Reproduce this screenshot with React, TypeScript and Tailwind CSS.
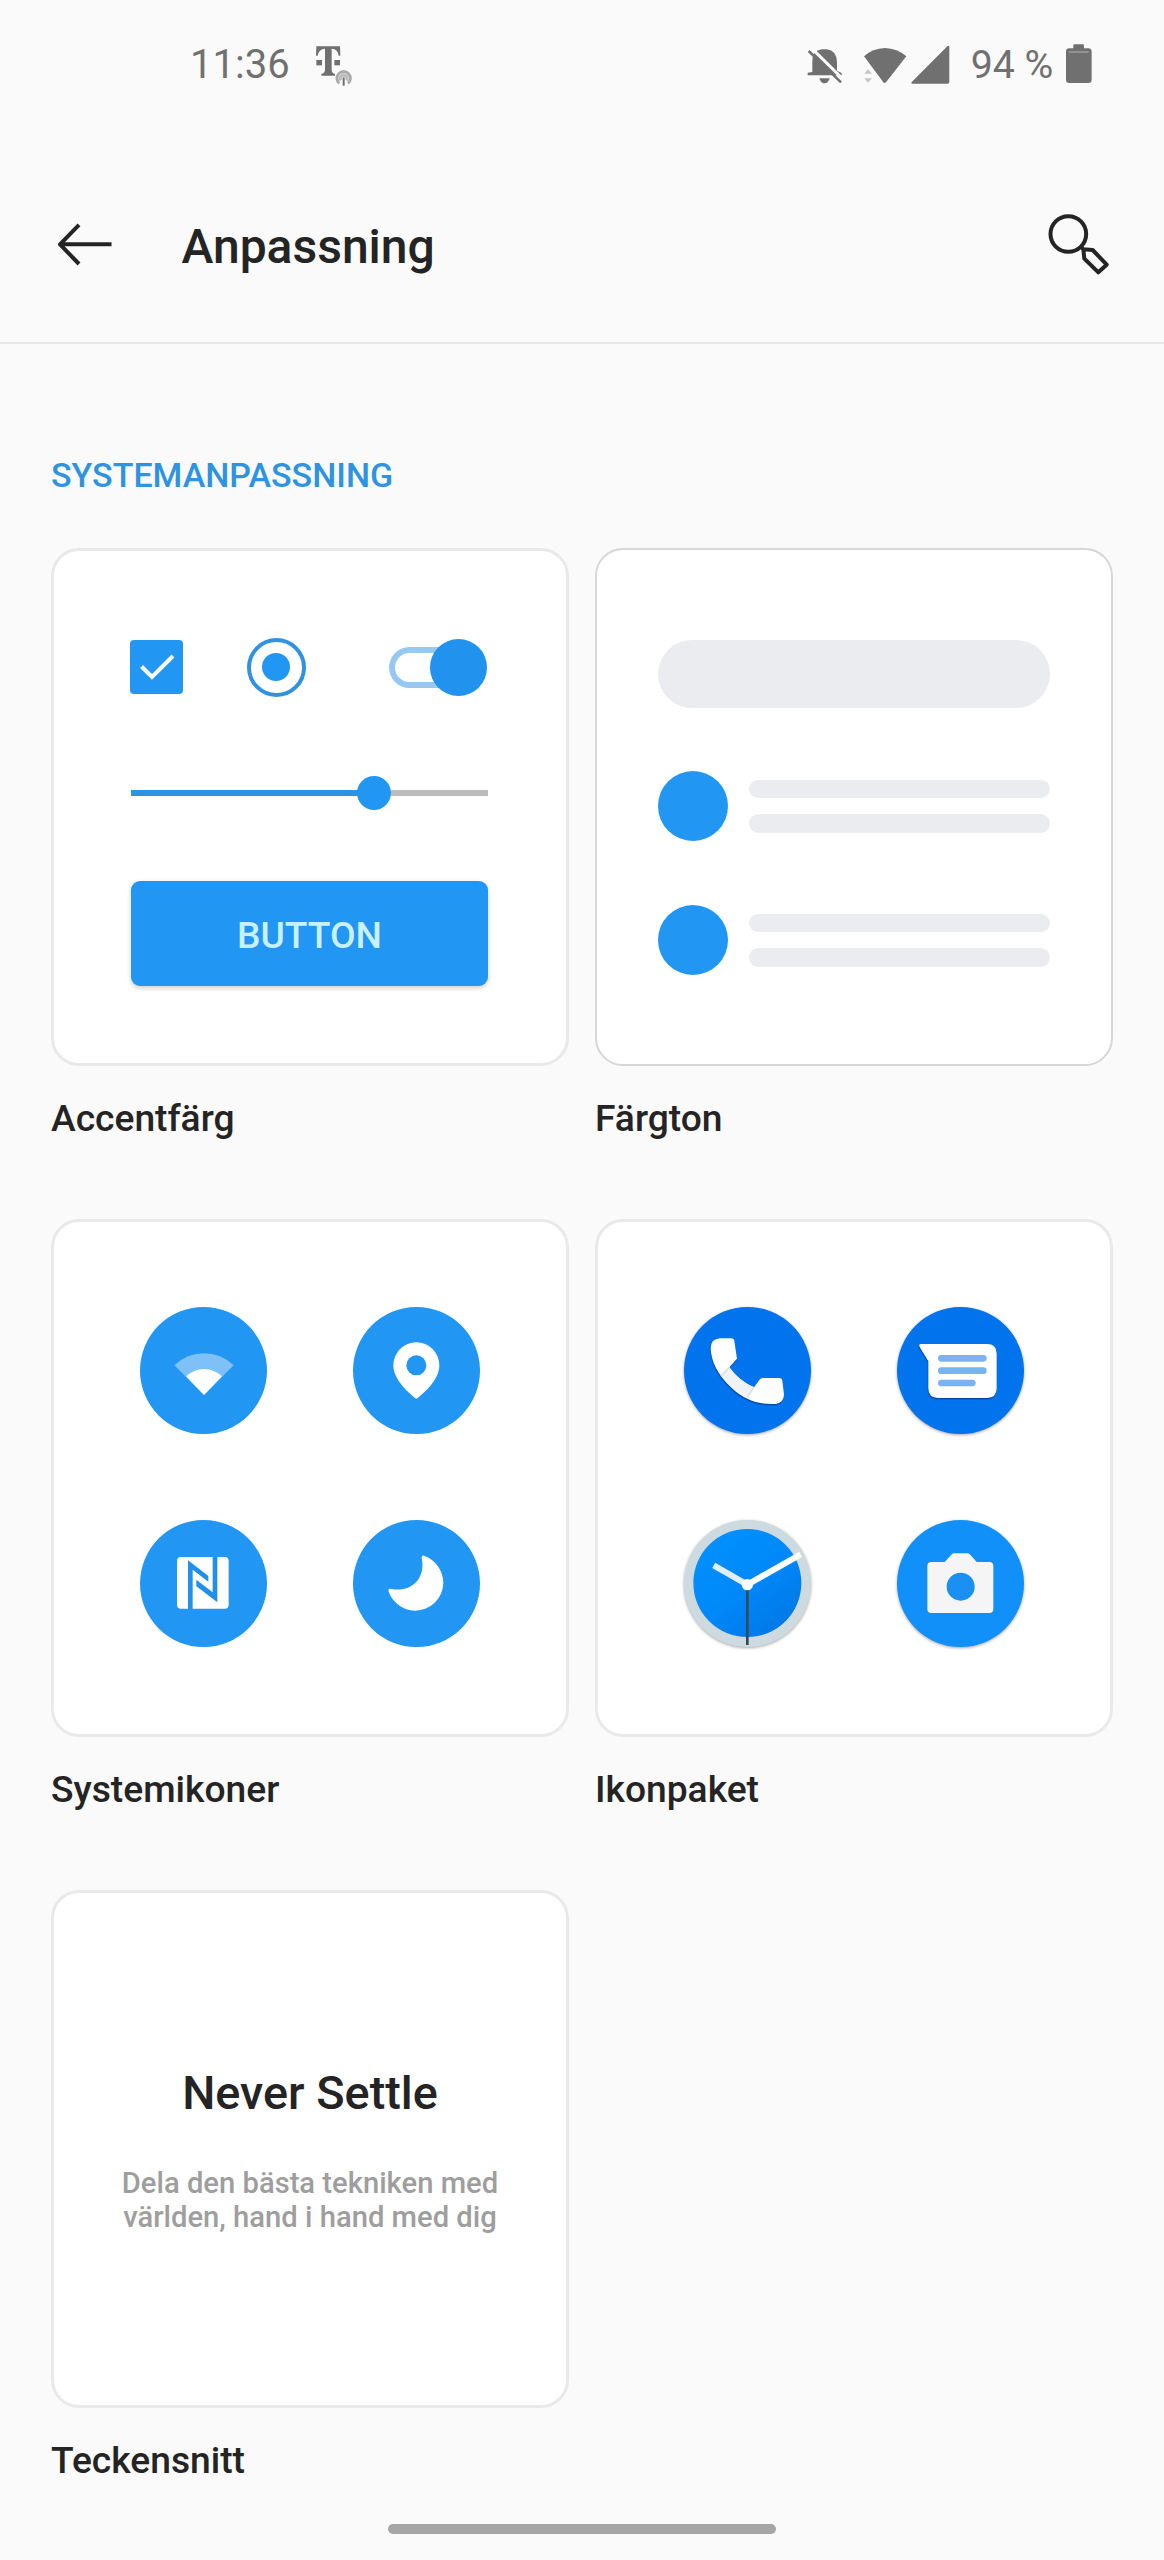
import type { ReactNode } from "react";

function OperatorLogo() {
  return (
    <svg viewBox="430 65 120 135" className="ml-[24px] mt-[0.7px] h-[45px] w-10">
      <path
        fill="#707070"
        d="M437 78H508L509 106H504Q502 86 483 85V147Q483 160 493 161V166H452V161Q463 160 463 147V85Q444 86 441 106H436Z"
      />
      <rect x="437" y="119" width="17" height="16" fill="#707070" />
      <rect x="491" y="119" width="17" height="16" fill="#707070" />
      <path d="M506 189A20 20 0 1 1 532 189" fill="none" stroke="#ababab" strokeWidth="9" />
      <path d="M511 180A10 10 0 1 1 527 180" fill="none" stroke="#bdbdbd" strokeWidth="9" />
      <path d="M519 171V196" stroke="#707070" strokeWidth="6" />
    </svg>
  );
}

function StatusBar() {
  return (
    <div className="flex h-[130px] items-start pl-[190px] pr-[71px] pt-[41px] text-[40px] leading-[48px] text-[#707070]">
      <span className="w-[100px] whitespace-nowrap">11:36</span>
      <OperatorLogo />
      <div className="ml-auto flex items-start">
        <svg viewBox="75 65 120 135" className="mt-[0.7px] h-[45px] w-10" fill="#707070">
          <path d="M97 155V124Q97 90 125 87H141Q170 91 171 125V151L185 158V165H83V157Z" />
          <path d="M118 174H149Q145 189 133 189Q122 189 118 174Z" />
          <path d="M90 79L193 180" stroke="#fafafa" strokeWidth="9" />
          <path d="M86 92L183 186" stroke="#707070" strokeWidth="7.5" />
        </svg>
        <svg viewBox="245 65 135 135" className="ml-[17px] mt-[0.7px] size-[45px]" fill="#707070">
          <path d="M251 108Q277 84 314 83Q351 84 378 108L317 186Q313 190 309 186Z" />
          <path d="M252 160L263 147L275 160ZM252 174H275L263 187Z" fill="#c6c6c6" />
        </svg>
        <svg viewBox="390 65 120 135" className="ml-[3px] mt-[0.7px] h-[45px] w-10" fill="#707070">
          <path d="M396 184L502 78Q508 74 508 81V184Q508 190 502 190H398Q391 189 396 184Z" />
        </svg>
        <span className="ml-[21px] w-[83px] whitespace-nowrap text-[39.3px]">94 %</span>
        <svg viewBox="855 65 85 135" className="ml-[11px] mt-[0.7px] h-[45px] w-[28.3px]" fill="#707070">
          <path d="M883 72H909Q912 72 912 75V84H925Q935 84 935 94V178Q935 188 925 188H868Q858 188 858 178V94Q858 84 868 84H880V75Q880 72 883 72Z" />
          <path d="M867 95H926" stroke="#b5b5b5" strokeWidth="3" />
        </svg>
      </div>
    </div>
  );
}

function Header() {
  return (
    <header className="flex h-[214px] items-start border-b-2 border-[#e6e6e6] pl-[55px] pr-[53px] pt-[82px]">
      <svg viewBox="56 212 60 65" className="h-[65px] w-[60px]" fill="none" stroke="#242424" strokeWidth="4">
        <path d="M112.5 244.3H61M80 224.8L61 244.3L80 264" strokeLinejoin="round" />
      </svg>
      <h1 className="ml-[66.5px] mt-[7px] text-[48px] font-medium leading-[56px] text-[#242424]">Anpassning</h1>
      <svg
        viewBox="140 95 195 195"
        className="ml-auto size-[65px]"
        fill="none"
        stroke="#242424"
        strokeWidth="12"
        strokeLinejoin="round"
      >
        <circle cx="207" cy="161" r="53.5" />
        <path d="M246 200L252 207L280 209L322 253L297 276L255 235L252 207" />
      </svg>
    </header>
  );
}

function Tile({ label, strong, children }: { label: string; strong?: boolean; children: ReactNode }) {
  return (
    <div>
      <div
        className={
          strong
            ? "h-[518px] rounded-[28px] border-2 border-[#d7d7d7] bg-white"
            : "h-[518px] rounded-[28px] border-[3px] border-[#e9e9e9] bg-white"
        }
      >
        {children}
      </div>
      <p className="mt-[28px] text-[37.2px] font-medium leading-[48px] text-[#242424]">{label}</p>
    </div>
  );
}

function AccentPreview() {
  return (
    <div className="flex flex-col pl-[77px] pr-[78px] pt-[86px]">
      <div className="-ml-[1.5px] flex h-[60px] items-center">
        <div className="h-[54px] w-[53px] rounded-[4px] bg-[#2196f3]">
          <svg viewBox="0 0 53 54" className="h-full w-full" fill="none" stroke="#fff" strokeWidth="4">
            <path d="M11.5 26.5L22 37L43 16" />
          </svg>
        </div>
        <div className="ml-16 flex size-[59px] items-center justify-center rounded-full border-4 border-[#3092e0]">
          <div className="size-7 rounded-full bg-[#2196f3]" />
        </div>
        <div className="ml-[83px] flex h-[41px] w-[98px] items-center rounded-full">
          <div className="h-[41px] w-[70px] shrink-0 rounded-l-full border-[6px] border-r-0 border-[#95c9f3]" />
          <div className="-ml-[29px] size-[57px] shrink-0 rounded-full bg-[#2192ee]" />
        </div>
      </div>
      <div className="mt-[78px] flex h-[35px] items-center">
        <div className="h-1.5 w-[228px] bg-[#2d93e3]" />
        <div className="-ml-[2px] size-[34px] rounded-full bg-[#2196f3]" />
        <div className="h-1.5 flex-1 bg-[#bdbdbd]" />
      </div>
      <div className="mt-[71px] flex h-[105px] items-center justify-center rounded-[9px] bg-[#2196f3] pt-[4px] text-[37.2px] font-medium text-[#c9f0ff] shadow-[0_2px_5px_rgba(0,0,0,0.2)]">
        BUTTON
      </div>
    </div>
  );
}

function TonePreview() {
  return (
    <div className="flex flex-col pl-[61px] pr-[61px] pt-[90px]">
      <div className="h-[68px] rounded-full bg-[#ebecf0]" />
      {["mt-[63px]", "mt-16"].map((gap) => (
        <div key={gap} className={`flex h-[70px] items-center justify-between ${gap}`}>
          <div className="size-[70px] rounded-full bg-[#2196f3]" />
          <div className="flex w-[301px] flex-col gap-4">
            <div className="h-[18.5px] rounded-full bg-[#ebecf0]" />
            <div className="h-[18.5px] rounded-full bg-[#ebecf0]" />
          </div>
        </div>
      ))}
    </div>
  );
}

function IconGrid({ children }: { children: ReactNode }) {
  return (
    <div className="grid grid-cols-[127px_127px] gap-x-[85.7px] gap-y-[85.7px] pl-[86px] pt-[85.3px]">{children}</div>
  );
}

function Disc({ fill, shadow, children }: { fill: string; shadow?: boolean; children: ReactNode }) {
  return (
    <svg
      viewBox="0 0 381 381"
      className={
        shadow
          ? "size-[127px] overflow-visible drop-shadow-[0_1.5px_1.5px_rgba(0,0,0,0.35)]"
          : "size-[127px] overflow-visible"
      }
    >
      <circle cx="190.5" cy="190.5" r="190.5" fill={fill} />
      {children}
    </svg>
  );
}

function SystemIcons() {
  return (
    <IconGrid>
      <Disc fill="#2196f3">
        <path d="M192 264L103 175A127 127 0 0 1 281 175Z" fill="#7ec1f8" />
        <path d="M192 264L138 208A78 78 0 0 1 246 208Z" fill="#fff" />
      </Disc>
      <Disc fill="#2196f3">
        <path
          d="M190 106A69 69 0 0 1 259 175C259 212 224 250 194 273Q190 276 186 273C156 250 121 212 121 175A69 69 0 0 1 190 106Z"
          fill="#fff"
        />
        <circle cx="190" cy="175" r="30" fill="#2196f3" />
      </Disc>
      <Disc fill="#2196f3">
        <rect x="111" y="111" width="155" height="155" rx="12" fill="#fff" />
        <path
          d="M144 267V121L205 168V185L158 149V267ZM232 110V247L169 199V179L218 217V110Z"
          fill="#2190ea"
        />
      </Disc>
      <Disc fill="#2196f3">
        <path
          d="M206 113Q206 104 215 108A87 87 0 0 1 271 188A85 85 0 0 1 186 272A87 87 0 0 1 107 215Q104 204 116 207C170 217 220 180 206 113Z"
          fill="#fff"
        />
      </Disc>
    </IconGrid>
  );
}

function PackIcons() {
  return (
    <IconGrid>
      <Disc fill="#0073ed" shadow>
        <g className="drop-shadow-[-1px_4px_1px_rgba(0,40,110,0.6)]">
          <path
            d="M80 124Q80 96 108 94H141Q150 94 151 102L159 155L136 181Q165 222 210 241L226 219Q230 213 237 213H285Q294 213 295 221L300 262Q300 288 274 291Q195 295 140 240Q82 185 80 124Z"
            fill="#fff"
          />
          <path d="M136 181Q165 222 210 241L190 270Q145 252 111 207Z" fill="#eff3f6" />
          <path d="M136 181L111 207M210 241L190 270" stroke="#dde1e5" strokeWidth="5" />
        </g>
      </Disc>
      <Disc fill="#0073ed" shadow>
        <path
          d="M72 111H270Q299 111 299 140V244Q299 273 270 273H123Q94 273 94 244V163L68 120Q64 111 72 111Z"
          fill="#fff"
          className="drop-shadow-[-1px_4px_1px_rgba(0,40,110,0.6)]"
        />
        <g fill="#7ab3f3">
          <rect x="123" y="144" width="146" height="20" rx="10" />
          <rect x="123" y="181" width="146" height="20" rx="10" />
          <rect x="123" y="218" width="113" height="20" rx="10" />
        </g>
      </Disc>
      <Disc fill="#cddbe0" shadow>
        <defs>
          <linearGradient id="dial" x1="0.25" y1="0.2" x2="0.8" y2="0.9">
            <stop offset="0" stopColor="#008ffc" />
            <stop offset="0.5" stopColor="#0087f8" />
            <stop offset="1" stopColor="#0079e8" />
          </linearGradient>
        </defs>
        <circle cx="190" cy="189" r="162" fill="url(#dial)" />
        <path d="M190 194L89 136" stroke="#e1eef8" strokeWidth="18" />
        <path d="M190 194L350 103" stroke="#fff" strokeWidth="18" />
        <path d="M190 194V375" stroke="#34495a" strokeWidth="8" />
        <circle cx="190" cy="194" r="17" fill="#fff" />
      </Disc>
      <Disc fill="#1190f9" shadow>
        <path
          d="M103 126H143L163 104Q167 100 172 100H211Q216 100 220 104L239 126H277Q289 126 289 138V267Q289 279 277 279H103Q91 279 91 267V138Q91 126 103 126Z"
          fill="#f5f5f5"
        />
        <circle cx="191" cy="200" r="42" fill="#1b8ff2" />
      </Disc>
    </IconGrid>
  );
}

function FontPreview() {
  return (
    <div className="flex flex-col items-center pt-[172px] text-center font-medium">
      <p className="text-[46.8px] leading-[56px] text-[#242424]">Never Settle</p>
      <p className="mt-[45px] whitespace-nowrap text-[29.2px] leading-[34px] text-[#9e9e9e]">
        Dela den bästa tekniken med
        <br />
        världen, hand i hand med dig
      </p>
    </div>
  );
}

export default function App() {
  return (
    <div className="flex h-[2560px] w-[1164px] flex-col overflow-hidden bg-[#fafafa] font-['Roboto',sans-serif]">
      <StatusBar />
      <Header />
      <main className="px-[51px] pt-[111px]">
        <h2 className="text-[34px] font-medium leading-10 text-[#2e93e0]">SYSTEMANPASSNING</h2>
        <div className="mt-[53px] grid grid-cols-2 gap-x-[26px] gap-y-[77px]">
          <Tile label="Accentfärg">
            <AccentPreview />
          </Tile>
          <Tile label="Färgton" strong>
            <TonePreview />
          </Tile>
          <Tile label="Systemikoner">
            <SystemIcons />
          </Tile>
          <Tile label="Ikonpaket">
            <PackIcons />
          </Tile>
          <Tile label="Teckensnitt">
            <FontPreview />
          </Tile>
        </div>
      </main>
      <div className="mx-auto mb-[26px] mt-auto h-[10px] w-[388px] rounded-full bg-[#a6a6a6]" />
    </div>
  );
}
